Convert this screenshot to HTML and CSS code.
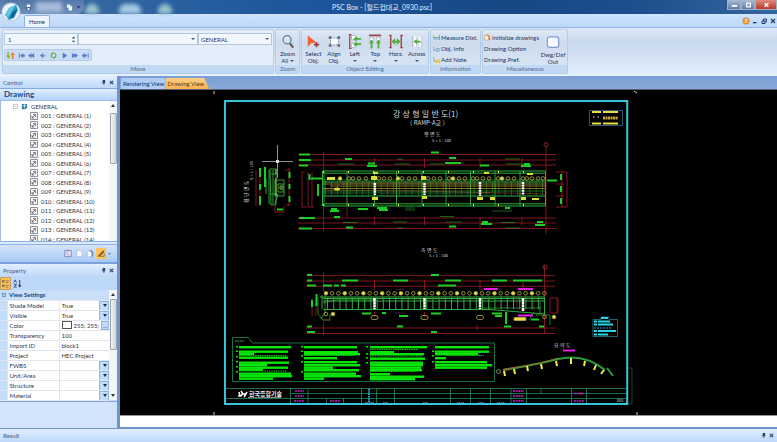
FILE: index.html
```html
<!DOCTYPE html>
<html lang="ko">
<head>
<meta charset="utf-8">
<title>PSC Box</title>
<link rel="stylesheet" href="styles.css">
</head>
<body>
<header class="titlebar">
  <div class="quick">
    <button class="orb" aria-label="Application menu"><svg viewBox="0 0 20 20"><circle cx="10" cy="10" r="9.5" fill="#b9c9dc"/><circle cx="10" cy="10" r="8.6" fill="#eef3f9"/><path d="M4 13 8 6 15 3 17 8 13 16 8 18Z" fill="#1e9bc4"/><path d="M4 13 8 6 15 3 11 9 7 16Z" fill="#5cc6de"/><path d="M9 16 11 11 16 7 13 15Z" fill="#12618f"/></svg></button>
    <button class="quick-btn" aria-label="Save"><svg viewBox="0 0 8 8"><path d="M1 1h6v6H1z" fill="#49699f"/><path d="M2 1h4v3H2zM3 5h2v2H3z" fill="#fff"/></svg></button>
    <span class="quick-blur"></span>
    <button class="quick-btn" aria-label="Copy"><svg viewBox="0 0 8 8"><path d="M1 1h4v4H1z" fill="#dfeaf7"/><path d="M3 3h4v5H3z" fill="#fff"/></svg></button>
    <button class="quick-more" aria-label="Customize"><svg viewBox="0 0 4 4"><path d="M0 1h4L2 4z" fill="#122c55"/></svg></button>
  </div>
  <span class="glow"></span><span class="glow glow-wide"></span><span class="glow"></span>
  <h1 class="title">PSC Box - [월드컵대교_0930.psc]</h1>
  <div class="window-buttons">
    <button aria-label="Minimize"><svg viewBox="0 0 12 8"><path d="M3 4h6v2H3z" fill="#fff"/></svg></button>
    <button aria-label="Maximize"><svg viewBox="0 0 12 8"><path d="M4 2h4v4H4z" fill="none" stroke="#fff" stroke-width="1.3"/></svg></button>
    <button class="close" aria-label="Close"><svg viewBox="0 0 12 8"><path d="M4 2 8 6M8 2 4 6" stroke="#fff" stroke-width="1.5"/></svg></button>
  </div>
</header>

<nav class="tabrow">
  <button class="home">Home</button>
  <div class="mdi">
    <button aria-label="Help"><svg viewBox="0 0 8 8"><circle cx="4" cy="4" r="3.2" fill="#f2a33a" stroke="#c4752a" stroke-width=".6"/><path d="M3 3q1-1.5 2 0L4 4.5M4 5.3v.7" fill="none" stroke="#fff" stroke-width=".8"/></svg></button>
    <button aria-label="Minimize drawing"><svg viewBox="0 0 8 8"><path d="M2 5h3.5v1.3H2z" fill="#1d3a6b"/></svg></button>
    <button aria-label="Restore drawing"><svg viewBox="0 0 8 8"><path d="M2 4h3v2.5H2zM3.4 4V2h3v2.8H5" fill="none" stroke="#1d3a6b"/></svg></button>
    <button aria-label="Close drawing"><svg viewBox="0 0 8 8"><path d="m2 2 4 4M6 2 2 6" stroke="#1d3a6b" stroke-width="1.2"/></svg></button>
  </div>
</nav>

<section class="ribbon">
  <div class="group move">
    <div class="fields">
      <input class="num" type="text" value="1" aria-label="Step">
      <span class="spin"><svg viewBox="0 0 4 8"><path d="M0 2.5 2 0l2 2.5zM0 5.5h4L2 8z" fill="#27364d"/></svg></span>
      <span class="pick pick-wide"><select aria-label="Item"><option></option></select></span>
      <span class="pick"><select aria-label="Category"><option>GENERAL</option></select></span>
    </div>
    <div class="nav">
      <button aria-label="Sort"><svg viewBox="0 0 10 8"><path d="M3 0v4h2L2.500 8 0 4h1.500V0z" fill="#7db928"/><path d="M7.500 0 10 3.500H8.500V8h-2V3.500H5z" fill="#f08028"/></svg></button>
      <button aria-label="First"><svg viewBox="0 0 10 8"><path d="M2 1h1v6H2zM7 1v6L3.500 4zM9 3v2H6V3z" fill="#5779c8"/></svg></button>
      <button aria-label="Fast back"><svg viewBox="0 0 10 8"><path d="M5 1v6L1 4zM8 1v6L4.500 4z" fill="#5779c8"/></svg></button>
      <button aria-label="Back"><svg viewBox="0 0 10 8"><path d="M6 1v6L2 4zM7 3h1v2H7z" fill="#5779c8"/></svg></button>
      <button aria-label="Refresh"><svg viewBox="0 0 10 8"><path d="M4.500 1.200a3 3 0 0 0-1 5.300M5.500 6.800a3 3 0 0 0 1-5.300" fill="none" stroke="#65b81f" stroke-width="1.4"/><path d="M4 0l2.500 1.300L4 3zM6 5v3L3.500 6.700z" fill="#65b81f"/></svg></button>
      <button aria-label="Forward"><svg viewBox="0 0 10 8"><path d="M4 1v6l4-3zM3 1h1v6H3z" fill="#5779c8"/></svg></button>
      <button aria-label="Fast forward"><svg viewBox="0 0 10 8"><path d="M2 1v6l4-3zM5 1v6l4-3z" fill="#5779c8"/></svg></button>
      <button aria-label="Last"><svg viewBox="0 0 10 8"><path d="M7.500 1h1v6h-1zM3 1v6l4-3zM1 3v2h3V3z" fill="#5779c8"/></svg></button>
    </div>
    <h2>Move</h2>
  </div>

  <div class="group zoom">
    <div class="tools"><button class="tool"><svg viewBox="0 0 16 16"><path d="m10 10 4 5" stroke="#675b58" stroke-width="2.400"/><circle cx="7" cy="6" r="4.600" fill="#cfe6f4" stroke="#6c819c" stroke-width="1.500"/><path d="M4.500 5q1-2 3-2" stroke="#fff" stroke-width="1.200" fill="none"/></svg>Zoom<br>All <i class="drop"></i></button></div>
    <h2>Zoom</h2>
  </div>

  <div class="group editing">
    <div class="tools">
      <button class="tool"><svg viewBox="0 0 16 16"><path d="M2 1v13l4-4 6-1z" fill="#f4622d"/><path d="M12 8.500v6M9 11.500h6" stroke="#a33c48" stroke-width="2"/></svg>Select<br>Obj.</button>
      <button class="tool"><svg viewBox="0 0 16 16"><path d="M4 4h9v8H4z" fill="#f8fafc" stroke="#7b8794" stroke-dasharray="2 1"/><path d="M2 2h3v3H2zM12 2h3v3h-3zM2 11h3v3H2zM12 11h3v3h-3z" fill="#63707e"/></svg>Align<br>Obj.</button>
      <button class="tool"><svg viewBox="0 0 16 16"><path d="M2 0v16M1 0h3M1 16h3" stroke="#a5404b" stroke-width="1.500"/><path d="M4 1h5v5H4zM4 10h4v5H4z" fill="#fff" stroke="#a9b3bd"/><path d="m6 5 4-3v2h5v2h-5v2zM6 11l4-3v2h5v2h-5v2z" fill="#51ad38"/></svg>Left<br><i class="drop"></i></button>
      <button class="tool"><svg viewBox="0 0 16 16"><path d="M1 1h14" stroke="#a5404b" stroke-width="1.800"/><path d="M2 3h4v4H2zM10 3h4v4h-4z" fill="#fff" stroke="#a9b3bd"/><path d="m4 6 3 4H5v6H3v-6H1zM12 6l3 4h-2v6h-2v-6H9z" fill="#51ad38"/></svg>Top<br><i class="drop"></i></button>
      <button class="tool"><svg viewBox="0 0 16 16"><path d="M2 1v14M14 1v14M0 1h3M13 1h3M0 15h3M13 15h3" stroke="#a5404b" stroke-width="1.600"/><path d="m3 8 4-4v3h2V4l4 4-4 4V9H7v3z" fill="#51ad38"/></svg>Horz.<br><i class="drop"></i></button>
      <button class="tool"><svg viewBox="0 0 16 16"><path d="M3 2v12M13 2v12" stroke="#aeb9c5" stroke-width="1.500"/><path d="M4 2h3v12H4zM10 2h3v12h-3z" fill="#f4f7fa"/><path d="m4 8 4-3v2h4v2H8v2z" fill="#51ad38"/></svg>Across<br><i class="drop"></i></button>
    </div>
    <h2>Object Editing</h2>
  </div>

  <div class="group info">
    <div class="lines">
      <button><svg viewBox="0 0 8 8"><path d="M0 1v6M7.500 1v6M0 4h7" stroke="#66ad55"/><path d="M1 4.500h6v2H1z" fill="#9bc3e8"/></svg>Measure Dist.</button>
      <button><svg viewBox="0 0 8 8"><path d="M1 2v4h2M4 4h3v3H4z" fill="none" stroke="#7d9fc9"/></svg>Obj. Info</button>
      <button><svg viewBox="0 0 8 8"><path d="M1 1v5h3" fill="none" stroke="#8199b9"/><path d="M3 4h5v4H3z" fill="#edc84f"/></svg>Add Note</button>
    </div>
    <h2>Information</h2>
  </div>

  <div class="group misc">
    <div class="misc-body">
      <div class="lines">
        <button><svg viewBox="0 0 8 8"><path d="M1 1h4v6H1z" fill="#fff" stroke="#c79356" stroke-width=".8"/><path d="M3 2q4-1 3 3l1 2" fill="none" stroke="#ed842c" stroke-width="1.500"/></svg>Initialize drawings</button>
        <button>Drawing Option</button>
        <button>Drawing Pref.</button>
      </div>
      <button class="tool"><svg viewBox="0 0 16 16"><rect x="1.500" y="1.500" width="13" height="12" rx="2.500" fill="#f6f9ff" stroke="#809bd0" stroke-width="1.400"/></svg>Dwg/Dxf<br>Out</button>
    </div>
    <h2>Miscellaneous</h2>
  </div>
</section>

<div class="work">
  <aside class="side">
    <div class="dock-head"><h2>Control</h2><button aria-label="Pin control"><svg viewBox="0 0 6 6"><path d="M2 0h3v3H2zM1 3h4v1H1zM3 4h1v2H3z" fill="#27446f"/></svg></button><button aria-label="Close control"><svg viewBox="0 0 6 6"><path d="m1 1 4 4M5 1 1 5" stroke="#27446f" stroke-width="1.300"/></svg></button></div>
    <h3 class="section-head">Drawing</h3>
    <div class="tree">
      <div class="tree-body">
        <div class="root"><svg class="minus" viewBox="0 0 6 6"><path d="M.5.5h5v5h-5zM2 3h2" fill="#fff" stroke="#a6abb4" stroke-width=".8"/></svg><svg class="cube" viewBox="0 0 8 8"><path d="M1 1h6v4L5 7H1z" fill="#3681a3"/><path d="M2 3h4M4 1v5" stroke="#bfe5ee"/></svg>GENERAL</div>
        <ul id="sheets"></ul>
      </div>
      <div class="scroll scroll-tree"><i class="up"></i><i class="thumb"></i></div>
    </div>
    <div class="grip"></div>
    <div class="tree-tools">
      <button aria-label="Edit sheet"><svg viewBox="0 0 10 10"><path d="M1 1h8v8H1z" fill="#e9e6fa" stroke="#766fae"/><path d="M3 3h3M3 5l4 3" stroke="#8b82bd"/></svg></button>
      <button aria-label="New sheet"><svg viewBox="0 0 10 10"><path d="M2 1h5l2 2v6H2z" fill="#f9fcff" stroke="#a6b6cf"/></svg></button>
      <button aria-label="Copy sheet"><svg viewBox="0 0 10 10"><path d="M4 1h3l2 2v6H4z" fill="#5f86c7"/><path d="M2 2h3l2 2v5H2z" fill="#fff" stroke="#a2b4d0" stroke-width=".6"/></svg></button>
      <button class="on" aria-label="Draw"><svg viewBox="0 0 10 10"><path d="M1 8 8 1l1 2-5 5z" fill="#805026"/><path d="M1 8.500h8V5" fill="none" stroke="#6d693d"/></svg></button>
      <button class="more" aria-label="More"><svg viewBox="0 0 4 4"><path d="M0 1h4L2 3z" fill="#536b91"/></svg></button>
    </div>
    <div class="dock-head dock-prop"><h2>Property</h2><button aria-label="Pin property"><svg viewBox="0 0 6 6"><path d="M2 0h3v3H2zM1 3h4v1H1zM3 4h1v2H3z" fill="#27446f"/></svg></button><button aria-label="Close property"><svg viewBox="0 0 6 6"><path d="m1 1 4 4M5 1 1 5" stroke="#27446f" stroke-width="1.300"/></svg></button></div>
    <div class="prop-tools">
      <button class="on" aria-label="Categorized"><svg viewBox="0 0 10 10"><path d="M1 1h3v3H1zM1 6h3v3H1z" fill="#8a7a4e"/><path d="M5 2h4M5 4h3M5 7h4M5 9h3" stroke="#766b54" stroke-width=".8"/></svg></button>
      <button aria-label="Sort properties"><svg viewBox="0 0 10 10"><path d="m1 4 1.500-3L4 4M1 6h3L1 9h3" fill="none" stroke="#2c4788"/><path d="M7 1v6H5.500L7.500 9.500 9.500 7H8V1z" fill="#28364f"/></svg></button>
    </div>
    <div class="props">
      <table>
        <thead><tr><th class="mark"><svg viewBox="0 0 4 4"><path d="M0 0h4v4H0z" fill="#7d9bc9"/><path d="M1 2h2" stroke="#fff"/></svg></th><th class="name">View Settings</th><th></th></tr></thead>
        <tbody>
          <tr><td class="mark"></td><td><label for="shade">Shade Model</label></td><td><span class="cell-pick"><select id="shade"><option>True</option></select></span></td></tr>
          <tr><td class="mark"></td><td><label for="visible">Visible</label></td><td><span class="cell-pick"><select id="visible"><option>True</option></select></span></td></tr>
          <tr><td class="mark"></td><td>Color</td><td><span class="color"><i></i><span>255; 255;</span><button aria-label="Choose color">...</button></span></td></tr>
          <tr><td class="mark"></td><td>Transparency</td><td>100</td></tr>
          <tr><td class="mark"></td><td>Import ID</td><td>block1</td></tr>
          <tr><td class="mark"></td><td>Project</td><td>HEC Project</td></tr>
          <tr><td class="mark"></td><td><label for="fwbs">FWBS</label></td><td><span class="cell-pick"><select id="fwbs"><option></option></select></span></td></tr>
          <tr><td class="mark"></td><td><label for="unit">Unit/Area</label></td><td><span class="cell-pick"><select id="unit"><option></option></select></span></td></tr>
          <tr><td class="mark"></td><td><label for="structure">Structure</label></td><td><span class="cell-pick"><select id="structure"><option></option></select></span></td></tr>
          <tr><td class="mark"></td><td><label for="material">Material</label></td><td><span class="cell-pick"><select id="material"><option></option></select></span></td></tr>
        </tbody>
      </table>
      <div class="scroll scroll-props"><i class="up"></i><i class="thumb"></i><i class="down"></i></div>
    </div>
    <div class="describe"></div>
  </aside>

  <main class="view">
    <div class="view-tabs"><button>Rendering View</button><button class="active">Drawing View</button></div>
    <div class="canvas">
      <svg id="sheet" viewBox="120 90 657 325" role="img" aria-label="Ramp A drawing">
        <path d="M214 91v3M634 91l3 2M214 412v3M637 412v3" stroke="#d8cfa8"/>
        <path d="M628 368h4v36h-4" fill="none" stroke="#13784a" stroke-width=".6"/>
        <g class="cap">
          <text x="393" y="117" font-size="8">강 상 형 일 반 도(1)</text>
          <text x="410" y="125" font-size="6">( RAMP-A교 )</text>
          <text x="424" y="136" font-size="5">평 면 도</text>
          <text x="432" y="142" font-size="4">S = 1 : 100</text>
          <text x="421" y="252" font-size="5">측 면 도</text>
          <text x="429" y="257" font-size="4">S = 1 : 100</text>
          <text x="554" y="347" font-size="5">요 약 도</text>
          <text transform="translate(248 203) rotate(-90)" font-size="5">횡 단 면 도</text>
          <text transform="translate(253 180) rotate(-90)" font-size="4">S = 1 : 100</text>
          <text x="617" y="402" font-size="4">001</text>
        </g>

        <g class="thin red">
          <path d="M298 154.500H556M298 160H556M298 165H556M298 218H556M298 223H556M298 228.500H556"/>
          <path d="M323.500 152v18M374.500 158v10M424.500 158v10M480 158v10M522 158v10M546 146v88M323.500 207v24M374.500 217v8M424.500 217v8M480 217v12M522 217v8M347 207v10"/>
          <path d="M305 172h-3v35h5M308 172v35h6M312 172v35M556 172h11v35h-11M562 172v35M556 184h8M556 196h8"/>
          <path d="M256 170v36M260 168v38M289 168v38M285 170h5M285 205h5M275 206v6h9v-6"/>
          <path d="M306 275.700H555M306 281H555M306 286.300H555M306 328H555M306 333.500H555"/>
          <path d="M323.500 272v20M374.500 280v10M424.500 280v10M480 280v10M523 280v10M544.500 266v68M323.500 322v13M374.500 312v5M424.500 312v5M477 325v5M312 298v18M316 298v18M550 298v15h8v-15zM557 298v15"/>
        </g>
        <g fill="none" stroke="#a5363c" stroke-width=".8"><circle cx="546" cy="144.500" r="2"/><circle cx="545" cy="267" r="2"/></g>

        <g class="green">
          <path stroke-width="2" d="M299 154.500h11M299 160h12M299 165.500h9M431 152.500h8M345 159h7M449 158h7M368 163.500h7M445 163h16M480 165.500h9M524 164h6M521 166h10M367 166h10M299 218h16M299 228.500h13M334 217h6M346 227.500h7M449 226.500h7M482 222h6M481 224h11M537 222h6M535 225h10M331 209h6M330 211h9M358 209h10M377 208h10M379 210h9M505 208h5M311 178.500h12M547 180.500h10M277 209.500h6"/>
          <path stroke-width="2" d="M260 168v9M260 184v6M260 196v9M289.500 172v6M289.500 184v5M289.500 196v6M265 167v20M309.500 174v6M318 184v12M561 174v6M561 186v6M561 198v6"/>
          <path stroke-width="2" d="M307 275h5M307 280.500h5M307 285.500h9M323 285.500h9M334 285.500h5M341 285.500h5M342 280.500h16M393 280.500h15M431 275h8M445 280.500h16M438 285.500h18M492 280.500h15M513 280.500h29M307 326.500h5M307 332h8M397 326.500h6M431 332h6M312 300v7M316.500 294v12M362 313.500h9M382 313h4M399 316h9M431 313.500h10M492 313.500h10M495 316h7M506 312v12M504 326.500h7M531 319.500h8M539 326.500h5"/>
          <path stroke-width=".5" d="M338 164h16M395 164h15M430 164h14M506 164h18M505 159h15M343 222.500h14M393 222h14M440 216.500h14M446 222h16M501 222.500h14M505 228h15M397 159h6M397 228h6M405 208h10M405 210h10M492 211h20"/>
        </g>

        <g fill="none" stroke="#31ae3d">
          <path stroke-width="1" d="M322.500 171H545.500V206H322.500zM324 173.200H545M324 203.800H545M323 182H545M323 196H545"/>
          <path stroke-width=".9" d="M324 171v35M347 171v35M374.500 171v35M396.500 171v35M422 171v35M446 171v35M470.500 171v35M495 171v35M520 171v35"/>
          <path stroke-width="15" stroke-dasharray=".6 5.600" opacity=".7" d="M325 188.500H545"/>
          <path stroke-width=".6" d="M323 180H545M323 191H545M323 193H490"/>
          <path stroke="#b9a83a" stroke-width=".7" d="M323 184H545M323 188.500H545M330 186H545"/>
          <path stroke="#8d5a32" stroke-width=".6" d="M323 190 420 191 545 194M340 183H470"/>
          <path stroke="#dedb4e" stroke-dasharray="1 24" stroke-width="2" d="M323 172H545M323 205H545"/>
        </g>
        <g id="plan-bubbles" class="bubble"></g>
        <g fill="#d8e13a"><path d="M373 172h5v2h-5zM484 172h5v2h-5zM527 173h6v2h-6zM327 177h8v3h-8zM371 176h6v4h-6zM421 176h5v4h-5zM372 197h6v3h-6zM422 196h5v3h-5zM477 197h6v3h-6zM490 197h5v3h-5zM521 197h5v3h-5zM532 198h7v2h-7z"/><ellipse cx="337" cy="189" rx="3" ry="1.500"/></g>
        <path stroke="#fff" stroke-width="2.500" stroke-dasharray="2 .6" d="M374.800 183v12M424.500 183v12M480 182v14M523 182v13"/>

        <g fill="none" stroke="#39c644" stroke-width=".8">
          <path d="M270 169h6v36h-5zM273 170v34M271 174h6M271 194h7l-3 10M275 180h9v16h-9zM278 184h5v8h-5zM266 178v16M269 170v34"/>
          <path stroke="#c6c94a" d="M280 186h2v3h-2zM276 169v5M276 178v18"/>
        </g>
        <path d="M262 161.500h31M277.500 145v33" stroke="#b4b4b4" stroke-width=".8"/><path d="M276 160h3v3h-3z" fill="#ddd"/>

        <g fill="none" stroke="#31ae3d">
          <path stroke-width="1" d="M320 297H544.500M323 298.500H544M323 301H544M323 309.500H490L544 314M544.500 297v17M322 295v14"/>
          <path stroke-width="12" stroke-dasharray="1 5.200" d="M327 303.500H545"/>
          <path stroke-width=".7" d="M325 294v18l-4 7M318 297v17l5 6h7v-6M323 303 336 300H374M540 302v12M534 312l-5 8M536 315h14v10M483 308h58"/>
          <path stroke="#8f3434" stroke-width=".6" d="M322 320h9M517 297v14M534 297v14"/>
        </g>
        <path stroke="#fff" stroke-width="2.500" stroke-dasharray="3 .3" d="M374.500 298v11M424.500 298v11M480 298v11M523 298v13"/>
        <g id="side-bubbles" class="bubble"></g>
        <g class="bubble"><circle cx="326" cy="314" r="1.800"/><circle cx="333" cy="314" r="1.800" class="solid"/><circle cx="544.500" cy="317" r="1.800"/><circle cx="554" cy="317" r="1.800" class="solid"/><rect x="371" y="315.500" width="7" height="4" rx="2"/><rect x="421" y="315.500" width="7" height="4" rx="2"/><rect x="476.500" y="315.500" width="7" height="4" rx="2"/><rect class="solid" x="514" y="317.500" width="12" height="3" rx="1"/></g>
        <path stroke="#e61ae6" stroke-width="2" d="M484 289h14M518 289h15M518 315.500h15M563 350.500h12"/>
        <path stroke="#8b1c8b" stroke-width=".7" stroke-dasharray="2 1" d="M396 289.500h9M395 313h10"/>

        <path d="M232.500 381.500V337.500h16l4 5.500H494.500v38.500z" fill="none" stroke="#1e8d57" stroke-width=".8"/>
        <path d="M235 341h9" stroke="#20b83e" stroke-dasharray="2 .5"/>
        <g id="notes" fill="#08e608"></g>

        <path fill="none" stroke="#238c62" stroke-width=".8" d="M226 388.500H627M290.500 393.500H626M226 398.500H626M290.500 388v16M308 388v16M361.500 388v16M376.500 388v16M394.500 388v16M450.500 388v16M470.500 388v16M490.500 388v16M511 388v16M526.500 388v16M541 388v5M571.500 388v16M586.500 388v16M343.500 398v6M326.500 398v6"/>
        <path stroke="#bd24c7" stroke-width="1.600" stroke-dasharray="2 .6" d="M295 391h9M295 396h9M294 401h10M330 401h10M513 391h11M513 396h11M513 401h11M574 393.500h10M574 401h10"/>
        <path stroke="#1eaab6" stroke-width="2" stroke-dasharray="1.500 .8" d="M369 389v13"/>
        <path stroke="#2f66b6" stroke-dasharray="1.500 .5" d="M365 402.500h9M383 402.500h5M423 402.500h5M457 402.500h7M478 402.500h6M497 402.500h8"/>
        <path stroke="#fff" stroke-width="1.500" fill="none" d="M238 396h3l2-3M241 391l2 3h3M240 396l-1-4M244 397l3-5"/>
        <text class="logo" x="249" y="396" font-size="6">한국종합기술</text>
        <path stroke="#ccc" stroke-width=".7" stroke-dasharray="2 .3" d="M248 397.500h33"/>

        <path fill="none" stroke="#2b9d39" stroke-width="2" d="M503 370Q535 365 558 359Q584 353 605 370M607 368l6 8"/>
        <path fill="none" stroke="#b7592d" stroke-width=".8" d="M504 369Q540 364 558 358M503 371l8-2"/>
        <path stroke="#f6e94a" stroke-width="2" d="m504 371 1 5M514 369l1 5M527 366l1 5M541 364l1 5M556 361l1 5M571 358v6M585 361l-1 5M596 365l-2 5M604 370l-3 4"/>
        <circle cx="498.500" cy="371.500" r="2" fill="none" stroke="#98a56a" stroke-width=".8"/>

        <path d="M589.500 110.500h33v15h-33z" fill="none" stroke="#3f7e91" stroke-width=".7"/>
        <path stroke="#e8df42" stroke-width="2" d="M592 112h9M603 112h15M592 123.500h9M603 123.500h15"/><path stroke="#c8a62f" stroke-width="3" stroke-dasharray="2 .5" d="M603 118h15"/><path stroke="#ddd" stroke-dasharray="1.500 3" d="M593 117h7"/>
        <path d="M593 319.500v17h24.500v-17H609V317h-8v2.500z" fill="none" stroke="#2b8d9d" stroke-width=".7"/>
        <path stroke="#27d5e5" stroke-width="2" d="M601 318h7M594 321.500h3M598 321.500h12M594 324.500h3M598 324.500h15M594 331h3M598 331h18M594 334.500h3M598 334.500h10"/><path stroke="#26a5b5" stroke-dasharray="2 1" d="M594 328h18"/>
        <path d="M225 101H627.200V404H225z" fill="none" stroke="#36c5d6" stroke-width="2"/>
      </svg>
    </div>
    <div class="blank"></div>
  </main>
</div>
<footer class="result"><h2>Result</h2><button aria-label="Pin result"><svg viewBox="0 0 6 6"><path d="M2 0h3v3H2zM1 3h4v1H1zM3 4h1v2H3z" fill="#27446f"/></svg></button><button aria-label="Close result"><svg viewBox="0 0 6 6"><path d="m1 1 4 4M5 1 1 5" stroke="#27446f" stroke-width="1.300"/></svg></button></footer>
<script src="app.js"></script>
</body>
</html>
```
FILE: app.js
```js
const icon = '<svg viewBox="0 0 8 8"><path d="M.5.5h7v7h-7z" fill="#f4f4f4" stroke="#8d9199"/><path d="M2 6 5 3M3 2.500h2.500V5M2 4v2h2" fill="none" stroke="#5f636c" stroke-width=".8"/></svg>';
document.getElementById('sheets').innerHTML = Array.from({ length: 14 }, (_, i) =>
  `<li>${icon}${String(i + 1).padStart(3, '0')} : GENERAL (${i + 1})</li>`).join('');

// Station bubbles along the plan and the side elevation.
const bubbles = (id, xs, y, solidEvery) => {
  document.getElementById(id).innerHTML = xs.map((x, i) =>
    `<circle cx="${x}" cy="${y}" r="1.8"${i % solidEvery === 0 ? ' class="solid"' : ''}/>`).join('');
};
bubbles('plan-bubbles', [340, 349, 353, 359, 366, 379, 384, 390, 398, 402, 409, 415, 428, 434, 440, 449, 453, 459, 465, 473, 477, 483, 489, 498, 502, 508, 514, 523, 527, 532, 538, 543], 178.5, 8);
bubbles('side-bubbles', Array.from({ length: 36 }, (_, i) => 326 + i * 6.24), 293.3, 3);

// Each note line: x, y, width.
const notes = [
  [239, 346, 52], [239, 350.5, 49], [239, 353, 15], [239, 356.5, 49], [239, 361.5, 50], [239, 364, 28], [239, 366.5, 49], [239, 368.5, 24], [239, 372.5, 52], [239, 375, 53], [239, 377.5, 34],
  [304, 346, 53], [304, 351, 54], [304, 353, 56], [304, 357, 33], [304, 361, 53], [304, 364, 56], [304, 366.5, 29], [304, 369, 55], [304, 372.5, 52], [304, 375, 57], [304, 377.500, 20],
  [370, 346, 57], [370, 351, 24], [370, 353, 54], [370, 357.500, 55], [370, 361.500, 53], [370, 364, 53], [370, 366.500, 51], [370, 369, 52], [370, 373, 20], [370, 375.500, 54], [370, 378, 45],
  [435, 346, 54], [435, 350.500, 54], [435, 353, 43], [435, 357, 11], [435, 361, 52], [435, 364, 57], [435, 366.500, 52]
];
const marks = [[236, 346], [236, 350.5], [236, 356], [236, 361], [236, 366], [236, 371], [301, 346], [301, 350.5], [301, 355], [301, 361], [301, 371], [366, 346], [366, 353], [366, 357], [366, 362], [432, 350.5], [432, 355], [432, 361]];
document.getElementById('notes').innerHTML =
  notes.map(([x, y, w]) => `<rect x="${x}" y="${y}" width="${w}" height="2.4"/>`).join('') +
  marks.map(([x, y]) => `<rect x="${x}" y="${y}" width="2" height="1.500"/>`).join('') +
  '<path d="M239 355.500h48M239 371h48M304 355.500h50M304 371h48M370 349.500h48M370 356h52M370 371.500h46M446 355.500h38" stroke="#08c808" stroke-width="1" stroke-dasharray="1.500 .8"/>';
```
FILE: styles.css
```css
* { box-sizing: border-box; }
html, body { height: 100%; margin: 0; }
body { display: flex; flex-direction: column; overflow: hidden; background: #6f93cb; color: #1e3358; font: 6px/7px Lato, "Noto Sans CJK KR", sans-serif; }
h1, h2, h3, ul { margin: 0; padding: 0; font: inherit; list-style: none; }
button, input, select { margin: 0; padding: 0; border: 0; border-radius: 0; background: none; color: inherit; font: inherit; appearance: none; outline: 0; }
svg { display: block; flex: none; }

.titlebar { position: relative; z-index: 1; flex: none; height: 14px; display: flex; background: linear-gradient(90deg, #456fa5, #285f9f 24%, #1e559b 40%, #164785 65%, #1c4d8c 80%, #34659f); }
.quick { display: flex; align-items: center; gap: 4px; padding-left: 1px; width: 84px; background: linear-gradient(#5477aa, #6e8fbd); border-radius: 0 0 7px 0; }
.orb { width: 20px; height: 22px; align-self: flex-start; padding-top: 2px; }
.orb svg { width: 20px; height: 20px; }
.quick-btn svg { width: 7px; height: 8px; }
.quick-blur { width: 26px; height: 10px; background: #a7bcd9; filter: blur(2px); }
.quick-more svg { width: 3px; height: 4px; }
.glow { width: 14px; height: 10px; margin: 4px 10px 0 1px; border-radius: 7px 7px 0 0; background: #9bc4cf; filter: blur(2px); }
.glow-wide { width: 22px; margin-left: 10px; margin-right: 16px; background: #a5cbe2; }
.title { position: absolute; inset: 0; text-align: center; padding-right: 13px; font-size: 7px; line-height: 15px; color: #e4edf8; pointer-events: none; }
.window-buttons { display: flex; margin-left: auto; height: 10px; }
.window-buttons button { width: 14px; background: linear-gradient(#a9bdd5, #5c7ba3); border: 1px solid #9cb2cc; border-top: 0; }
.window-buttons .close { width: 22px; background: linear-gradient(#dc8d80, #bc3725); }
.window-buttons svg { width: 11px; height: 8px; margin: auto; }

.tabrow { flex: none; height: 13px; display: flex; align-items: flex-end; padding-left: 24px; background: linear-gradient(#cfe3fd, #bdd7fa); }
.home { width: 26px; height: 12px; border: 1px solid #8fb2e3; border-bottom: 0; border-radius: 2px 2px 0 0; background: #eef5fe; }
.mdi { display: flex; gap: 1px; margin-left: auto; align-self: center; }
.mdi svg { width: 8px; height: 8px; }

.ribbon { flex: none; height: 49px; display: flex; gap: 1px; padding: 1px 2px; border-top: 1px solid #8db2e3; border-bottom: 1px solid #e8f3ff; background: linear-gradient(#dce8f6, #c8d9ed 30%, #d7e5f6 70%, #e0eefc); }
.group { display: flex; flex-direction: column; border: 1px solid #b5cce9; border-radius: 2px; overflow: hidden; background: linear-gradient(#dfe9f6, #cddbed 30%, #dae7f6); white-space: nowrap; }
.group h2 { flex: none; height: 8px; margin-top: auto; line-height: 8px; text-align: center; background: #c1d9f3; color: #4e6d99; }
.move { flex: 0 0 272px; background: #e4eefb; }
.zoom { flex: 0 0 25px; }
.editing { flex: 0 0 128px; }
.info { flex: 0 0 51px; }
.misc { flex: 0 0 86px; }
.fields { display: flex; height: 12px; margin: 3px 1px 0; }
.num { width: 66px; padding-left: 3px; border: 1px solid #b3c7e1; border-right: 0; background: #f2f7fd; }
.spin { width: 8px; padding: 2px; border: 1px solid #b3c7e1; border-left: 0; background: #f2f7fd; }
.spin svg { width: 3px; height: 7px; }
.pick, .cell-pick { position: relative; display: flex; flex: 1; }
.pick { max-width: 74px; }
.pick-wide { max-width: none; }
.pick select { width: 100%; padding-left: 2px; border: 1px solid #b3c7e1; background: #f2f7fd; }
.pick::after { content: ""; position: absolute; right: 3px; top: 5px; border: 2px solid transparent; border-top-color: #435a7e; border-bottom: 0; }
.nav { display: flex; width: 88px; height: 12px; margin: 4px 0 0 1px; align-items: center; background: #c9dcf6; border: 1px solid #b3cceb; border-radius: 2px; }
.nav button { flex: 1; }
.nav svg { width: 9px; height: 7px; margin: auto; }
.tools { display: flex; padding: 3px 1px 0; }
.tool { flex: 1; text-align: center; }
.tool svg { width: 14px; height: 15px; margin: 1px auto; }
.drop { display: inline-block; border: 2px solid transparent; border-top-color: #435a7e; border-bottom: 0; vertical-align: 1px; }
.lines { display: flex; flex-direction: column; padding: 2px 0 0 2px; }
.lines button { display: flex; align-items: center; gap: 1px; height: 11px; text-align: left; }
.lines svg { width: 7px; height: 7px; }
.misc-body { display: flex; }
.misc-body .lines { padding-left: 1px; }
.misc-body .tool { padding-top: 3px; }

.work { flex: 1; min-height: 0; display: flex; gap: 3px; }
.side { flex: 0 0 117px; display: flex; flex-direction: column; min-height: 0; background: #bfd9fc; }
.dock-head, .result { flex: none; display: flex; align-items: center; gap: 3px; height: 12px; padding: 0 3px; background: linear-gradient(#e2eefe, #bed8fa); }
.dock-head h2, .result h2 { margin-right: auto; color: #3b5988; }
.dock-head svg, .result svg { width: 5px; height: 5px; }
.section-head { flex: none; height: 13px; padding-left: 4px; border-top: 1px solid #82abdf; border-bottom: 1px solid #9dbfe9; background: linear-gradient(#dfedff, #b4d3fa); color: #174a8b; font-weight: 700; font-size: 8px; line-height: 11px; }
.tree { flex: 1; min-height: 0; display: flex; overflow: hidden; background: #fff; border-left: 1px solid #9fbde4; }
.tree-body { flex: 1; color: #30343c; white-space: nowrap; }
.root { display: flex; align-items: center; height: 10px; padding-left: 12px; }
.root .minus { width: 5px; height: 5px; margin-right: 3px; }
.root .cube { width: 7px; height: 7px; margin-right: 3px; }
.tree ul { display: grid; grid-auto-rows: 1fr; height: 133px; padding-left: 29px; }
.tree li { display: flex; align-items: center; gap: 3px; }
.tree li svg { width: 8px; height: 8px; }
.scroll { flex: 0 0 8px; display: flex; flex-direction: column; align-items: center; background: #f4f5f8; }
.scroll .up, .scroll .down { flex: none; margin: 3px 0; border: 2px solid transparent; border-top: 0; border-bottom: 3px solid #333c4c; }
.scroll .down { margin-top: auto; transform: rotate(180deg); }
.scroll .thumb { width: 7px; height: 51px; border: 1px solid #9ca4b2; border-radius: 1px; background: linear-gradient(90deg, #f2f3f6, #cfd4dd); }
.scroll-tree .up { margin-bottom: 6px; }
.grip { flex: none; height: 4px; border-top: 1px solid #8eb1df; border-bottom: 1px solid #8eb1df; background: #dceafd; }
.tree-tools { flex: none; display: flex; align-items: center; justify-content: flex-end; gap: 1px; height: 17px; padding-right: 5px; background: linear-gradient(#d4e5fc, #a9caf5); }
.tree-tools button { padding: 1px; }
.tree-tools svg { width: 8px; height: 9px; }
.tree-tools .on, .prop-tools .on { background: #fdc258; }
.tree-tools .more svg { width: 3px; height: 4px; }
.dock-prop { height: 15px; border-top: 2px solid #7ba2da; }
.prop-tools { flex: none; display: flex; height: 13px; gap: 1px; background: #bed8fa; }
.prop-tools button { padding: 1px; border-radius: 1px; }
.prop-tools .on { border: 1px solid #c99a52; padding: 0; }
.prop-tools svg { width: 9px; height: 9px; }
.props { flex: none; display: flex; height: 110px; background: #fff; }
table { flex: 1; width: 109px; table-layout: fixed; border-collapse: collapse; color: #31363f; }
tr { height: 10px; }
td, th { height: 10px; padding: 0 0 0 2px; line-height: 9px; text-align: left; white-space: nowrap; overflow: hidden; border-bottom: 1px solid #e2e6ec; border-right: 1px solid #e2e6ec; }
th { background: #c9dff9; border-right: 0; color: #1d4582; font-weight: 700; }
.name { width: 52px; }
.mark { width: 7px; padding: 0; background: #c3dcf8; }
.mark svg { width: 4px; height: 4px; margin: 0 auto; }
td:last-child { border-right: 0; }
.cell-pick { height: 9px; }
.cell-pick select { width: 100%; height: 9px; line-height: 9px; }
.cell-pick::before { content: ""; position: absolute; right: 0; top: 0; width: 8px; height: 9px; background: #c3dcf8; border: 1px solid #8eb3df; pointer-events: none; }
.cell-pick::after { content: ""; position: absolute; right: 2px; top: 3px; border: 2px solid transparent; border-top: 3px solid #17305c; border-bottom: 0; pointer-events: none; }
.color { display: flex; height: 9px; gap: 2px; }
.color i { flex: none; width: 10px; height: 8px; border: 1px solid #555; }
.color > span { flex: 1; }
.color button { width: 8px; height: 9px; background: #c3dcf8; border: 1px solid #8eb3df; line-height: 5px; }
.describe { flex: none; height: 27px; margin-top: 1px; background: #d2e4fb; border-top: 1px solid #84a9df; }

.view { flex: 1; min-width: 0; display: flex; flex-direction: column; }
.view-tabs { flex: none; display: flex; height: 14px; padding: 2px 1px 0; background: linear-gradient(#7b9fd5, #88a9d8); border-bottom: 1px solid #56657c; }
.view-tabs button { padding: 0 1px 0 2px; background: #afccf5; border-radius: 2px 2px 0 0; color: #173569; white-space: nowrap; }
.view-tabs .active { padding: 0 5px 0 2px; background: linear-gradient(#ffcf85, #f9b355); clip-path: polygon(0 0, calc(100% - 5px) 0, 100% 100%, 0 100%); color: #5a3a17; }
.canvas { flex: 1; min-height: 0; background: #000; }
.canvas > svg { width: 100%; height: 100%; }
.blank { flex: none; height: 12px; margin-bottom: 1px; background: #fff; border-top: 1px solid #99918c; }
.result { height: 13px; margin-top: 1px; }

.cap text, .logo { fill: #dadada; font-family: "Noto Sans CJK KR", sans-serif; }
.cap text { white-space: pre; }
.logo { fill: #eee; font-weight: 700; }
.thin { fill: none; stroke-width: .8; }
.red { stroke: #a01a28; }
.green { fill: none; stroke: #19cf25; }
.bubble { fill: none; stroke: #b8b044; stroke-width: .8; }
.bubble .solid { fill: #e9df43; }
```
